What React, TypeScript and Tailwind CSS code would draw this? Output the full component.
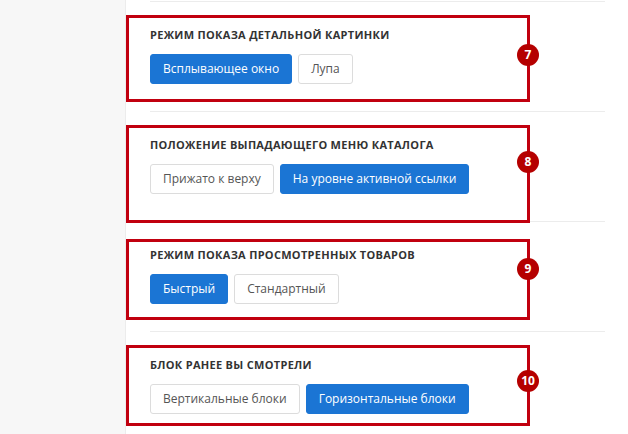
import React from "react";

type Btn = { label: string; active: boolean };
type Section = { title: string; buttons: Btn[] };

const sections: Section[] = [
  {
    title: "Режим показа детальной картинки",
    buttons: [
      { label: "Всплывающее окно", active: true },
      { label: "Лупа", active: false },
    ],
  },
  {
    title: "Положение выпадающего меню каталога",
    buttons: [
      { label: "Прижато к верху", active: false },
      { label: "На уровне активной ссылки", active: true },
    ],
  },
  {
    title: "Режим показа просмотренных товаров",
    buttons: [
      { label: "Быстрый", active: true },
      { label: "Стандартный", active: false },
    ],
  },
  {
    title: "Блок ранее вы смотрели",
    buttons: [
      { label: "Вертикальные блоки", active: false },
      { label: "Горизонтальные блоки", active: true },
    ],
  },
];

const marks = [
  { top: 15, height: 87, badgeTop: 55, n: "7" },
  { top: 125, height: 98, badgeTop: 162, n: "8" },
  { top: 239, height: 81, badgeTop: 269, n: "9" },
  { top: 345, height: 81, badgeTop: 381, n: "10" },
];

export default function App() {
  return (
    <div
      className="relative flex w-[628px] h-[434px] overflow-hidden bg-white"
      style={{ fontFamily: '"Open Sans", "Noto Sans", sans-serif' }}
    >
      <div className="w-[126px] shrink-0 bg-[#f7f7f7] border-r border-[#ececec]" />
      <div className="flex-1 pl-[24px] pr-[23px] pt-[1px]">
        <div className="border-t border-[#ececec]" />
        {sections.map((s) => (
          <div key={s.title} className="border-b border-[#ececec] pt-[25px] pb-[27px]">
            <div className="text-[11px] leading-[15px] font-bold uppercase tracking-[0.3px] text-[#333]">
              {s.title}
            </div>
            <div className="mt-[12px] flex gap-[6px]">
              {s.buttons.map((b) => (
                <div
                  key={b.label}
                  className={
                    b.active
                      ? "h-[30px] px-[12px] flex items-center rounded-[3px] bg-[#1b75d4] border border-[#1b75d4] text-white text-[12px] font-medium"
                      : "h-[30px] px-[12px] flex items-center rounded-[3px] bg-white border border-[#dcdcdc] text-[#555] text-[12px]"
                  }
                >
                  {b.label}
                </div>
              ))}
            </div>
          </div>
        ))}
      </div>
      {marks.map((m) => (
        <React.Fragment key={m.n}>
          <div
            className="absolute left-[126px] w-[404px] border-[3px] border-[#c1000f]"
            style={{ top: m.top, height: m.height }}
          />
          <div
            className="absolute left-[517px] w-[22px] h-[22px] rounded-full bg-[#b50000] flex items-center justify-center text-white text-[12px] font-bold"
            style={{ top: m.badgeTop - 11 }}
          >
            {m.n}
          </div>
        </React.Fragment>
      ))}
    </div>
  );
}
